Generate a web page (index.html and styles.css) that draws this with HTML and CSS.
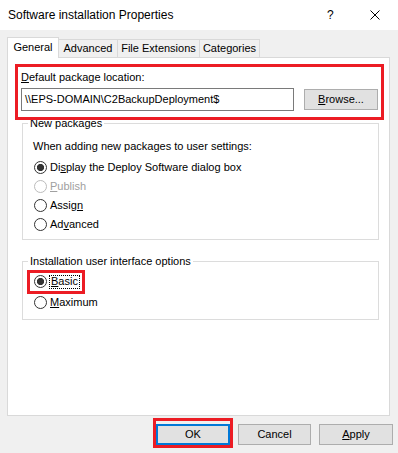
FILE: index.html
```html
<!DOCTYPE html>
<html lang="en">
<head>
<meta charset="utf-8">
<title>Software installation Properties</title>
<link rel="stylesheet" href="styles.css">
</head>
<body>
<div class="window">
  <div class="titlebar">
    <span class="title">Software installation Properties</span>
    <div class="controls">
      <span class="help">?</span>
      <svg class="close" width="10" height="10" viewBox="0 0 10 10"><path d="M0.5 0.5 L9.5 9.5 M9.5 0.5 L0.5 9.5" stroke="#000" stroke-width="1" fill="none"/></svg>
    </div>
  </div>
  <div class="content">
    <div class="tabs">
      <div class="tab active tab-general">General</div>
      <div class="tab tab-advanced">Advanced</div>
      <div class="tab tab-ext">File Extensions</div>
      <div class="tab tab-cat">Categories</div>
    </div>
    <div class="panel">
      <div class="highlight location">
        <div class="label"><u>D</u>efault package location:</div>
        <div class="path-row">
          <div class="textbox">\\EPS-DOMAIN\C2BackupDeployment$</div>
          <div class="btn browse"><u>B</u>rowse...</div>
        </div>
      </div>
      <fieldset class="group group-new">
        <legend>New packages</legend>
        <div class="intro">When adding new packages to user settings:</div>
        <div class="radio-row"><span class="radio checked"></span><span class="rlabel">Di<u>s</u>play the Deploy Software dialog box</span></div>
        <div class="radio-row disabled"><span class="radio"></span><span class="rlabel"><u>P</u>ublish</span></div>
        <div class="radio-row"><span class="radio"></span><span class="rlabel">Assig<u>n</u></span></div>
        <div class="radio-row"><span class="radio"></span><span class="rlabel">Ad<u>v</u>anced</span></div>
      </fieldset>
      <fieldset class="group group-ui">
        <legend>Installation user interface options</legend>
        <div class="radio-row">
          <span class="highlight hl-basic"><span class="radio checked"></span><span class="rlabel focus"><u>B</u>asic</span></span>
        </div>
        <div class="radio-row row-max"><span class="radio"></span><span class="rlabel"><u>M</u>aximum</span></div>
      </fieldset>
    </div>
    <div class="buttons">
      <div class="highlight hl-ok"><div class="btn ok">OK</div></div>
      <div class="btn cancel">Cancel</div>
      <div class="btn apply"><u>A</u>pply</div>
    </div>
  </div>
</div>
</body>
</html>
```

FILE: styles.css
```css
* { box-sizing: border-box; }
html, body { margin: 0; padding: 0; }
body {
  width: 398px;
  height: 453px;
  overflow: hidden;
  background: #f0f0f0;
  font-family: "Liberation Sans", Arial, sans-serif;
  font-size: 11px;
  line-height: 13px;
  color: #000;
}
u { text-decoration: underline; text-underline-offset: 1px; }

.titlebar {
  height: 30px;
  background: #fff;
  display: flex;
  align-items: center;
  padding-left: 8px;
}
.title { font-size: 12px; }
.controls {
  margin-left: auto;
  display: flex;
  align-items: center;
  padding-right: 18px;
}
.help { font-size: 12px; width: 7px; margin-right: 36px; }
.close { display: block; }

.content { padding: 7px 0 0 7px; }

.tabs {
  display: flex;
  align-items: flex-end;
  height: 20px;
}
.tab {
  height: 18px;
  border: 1px solid #d9d9d9;
  border-bottom: none;
  background: #f0f0f0;
  display: flex;
  align-items: center;
  justify-content: center;
  margin-left: -1px;
}
.tab.active {
  height: 21px;
  margin-bottom: -1px;
  background: #fff;
  position: relative;
  z-index: 2;
  margin-left: 0;
  padding-bottom: 2px;
}
.tab-general { width: 52px; }
.tab-advanced { width: 60px; }
.tab-ext { width: 83px; }
.tab-cat { width: 61px; }

.panel {
  width: 383px;
  height: 359px;
  background: #fff;
  border: 1px solid #d9d9d9;
  padding: 6px 0 0 7px;
}

.highlight {
  border: 3px solid #ec1c24;
  position: relative;
  z-index: 1;
}
.location {
  width: 369px;
  height: 56px;
  padding: 4px 0 0 3px;
}
.path-row {
  display: flex;
  align-items: center;
  margin-top: 4px;
}
.textbox {
  width: 273px;
  height: 23px;
  border: 1px solid #7a7a7a;
  background: #fff;
  padding-left: 3px;
  display: flex;
  align-items: center;
  white-space: nowrap;
}
.btn {
  height: 21px;
  background: #e1e1e1;
  border: 1px solid #adadad;
  display: flex;
  align-items: center;
  justify-content: center;
}
.browse { width: 74px; margin-left: 10px; }

.group {
  margin: 0 0 0 7px;
  width: 357px;
  border: 1px solid #dcdcdc;
  min-width: 0;
}
.group legend {
  padding: 0 2px;
  margin-left: -5px;
  line-height: 13px;
}
.group-new {
  margin-top: -3px;
  padding: 10px 0 5px 10px;
}
.group-ui {
  margin-top: 15px;
  padding: 4px 0 7px 10px;
}
.intro { margin-bottom: 5px; }

.radio-row {
  height: 19px;
  display: flex;
  align-items: center;
  padding-left: 1px;
}
.row-max { margin-top: 2px; }
.radio {
  width: 13px;
  height: 13px;
  border-radius: 50%;
  border: 1px solid #333;
  background: #fff;
  flex: none;
}
.radio.checked {
  background: radial-gradient(circle, #333 0 3.3px, #fff 3.9px);
}
.rlabel { margin-left: 3px; white-space: nowrap; }
.disabled .radio { border-color: #bcbcbc; }
.disabled .rlabel { color: #a0a0a0; }

.hl-basic {
  display: flex;
  align-items: center;
  height: 24px;
  padding: 0 2px 0 4px;
  margin-left: -7px;
}
.focus {
  border: 1px dotted #000;
  padding: 0 1px;
  margin-left: 2px;
  height: 14px;
  display: flex;
  align-items: center;
}

.buttons {
  display: flex;
  align-items: flex-start;
  margin-top: 8px;
  padding-left: 146px;
}
.hl-ok {
  padding-top: 3px;
  margin: -6px 0 0 0;
}
.ok {
  width: 74px;
  border: 2px solid #0078d7;
}
.cancel { width: 73px; margin-left: 5px; }
.apply { width: 74px; margin-left: 8px; }
```
